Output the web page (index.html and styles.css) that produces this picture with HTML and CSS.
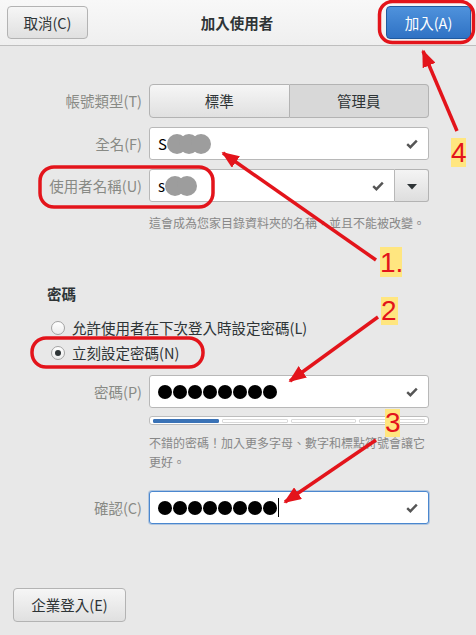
FILE: index.html
```html
<!DOCTYPE html>
<html lang="zh-Hant">

<head>
    <meta charset="UTF-8">
    <meta name="viewport" content="width=device-width, initial-scale=1.0">
    <title>加入使用者</title>
    <link rel="stylesheet" href="styles.css">
</head>

<body>
    <header class="titlebar">
        <button class="btn btn-cancel">取消(C)</button>
        <h1 class="title">加入使用者</h1>
        <button class="btn btn-add">加入(A)</button>
    </header>

    <div class="content">
        <div class="form">
            <label class="label">帳號類型(T)</label>
            <div class="toggle">
                <button class="toggle-item">標準</button>
                <button class="toggle-item checked">管理員</button>
            </div>

            <label class="label" for="fullname">全名(F)</label>
            <div class="entry" id="fullname">
                <span class="entry-text">S<span class="blob"></span><span class="blob"></span><span class="blob"></span></span>
                <svg class="check" width="12" height="10" viewBox="0 0 12 10"><path d="M1.2 5.2 L4.4 8.2 L10.8 1.6" fill="none" stroke="#555" stroke-width="2.4" /></svg>
            </div>

            <label class="label" for="username">使用者名稱(U)</label>
            <div class="combo">
                <div class="entry entry-combo" id="username">
                    <span class="entry-text">s<span class="blob"></span><span class="blob"></span></span>
                    <svg class="check" width="12" height="10" viewBox="0 0 12 10"><path d="M1.2 5.2 L4.4 8.2 L10.8 1.6" fill="none" stroke="#555" stroke-width="2.4" /></svg>
                </div>
                <button class="combo-button">
                    <svg width="10" height="6" viewBox="0 0 10 6"><path d="M0 0 H10 L5 5.5 Z" fill="#2e3436" /></svg>
                </button>
            </div>

            <p class="hint hint-first">這會成為您家目錄資料夾的名稱，並且不能被改變。</p>
        </div>

        <div class="password">
            <h2 class="section-title">密碼</h2>
            <div class="radio-row">
                <span class="radio"></span>
                <span>允許使用者在下次登入時設定密碼(L)</span>
            </div>
            <div class="radio-row">
                <span class="radio checked"></span>
                <span>立刻設定密碼(N)</span>
            </div>
        </div>

        <div class="form form-password">
            <label class="label" for="pw">密碼(P)</label>
            <div class="entry" id="pw">
                <span class="dots"><i></i><i></i><i></i><i></i><i></i><i></i><i></i><i></i></span>
                <svg class="check" width="12" height="10" viewBox="0 0 12 10"><path d="M1.2 5.2 L4.4 8.2 L10.8 1.6" fill="none" stroke="#555" stroke-width="2.4" /></svg>
            </div>

            <div class="strength">
                <span class="level filled"></span>
                <span class="level"></span>
                <span class="level"></span>
                <span class="level"></span>
            </div>

            <p class="hint hint-pw">不錯的密碼！加入更多字母、數字和標點符號會讓它更好。</p>

            <label class="label label-confirm" for="confirm">確認(C)</label>
            <div class="entry entry-focus" id="confirm">
                <span class="dots"><i></i><i></i><i></i><i></i><i></i><i></i><i></i><i></i></span>
                <span class="cursor"></span>
                <svg class="check" width="12" height="10" viewBox="0 0 12 10"><path d="M1.2 5.2 L4.4 8.2 L10.8 1.6" fill="none" stroke="#555" stroke-width="2.4" /></svg>
            </div>
        </div>

        <div class="footer">
            <button class="btn btn-enterprise">企業登入(E)</button>
        </div>
    </div>

    <!-- markup drawn over the dialog -->
    <svg class="marks" width="476" height="635" viewBox="0 0 476 635">
        <defs>
            <marker id="head" markerWidth="5" markerHeight="4" refX="4.5" refY="2" orient="auto">
                <path d="M0 0 L5 2 L0 4 Z" fill="#e3141b" />
            </marker>
        </defs>
        <g fill="none" stroke="#e3141b" stroke-width="3.5">
            <rect x="379.5" y="1.5" width="94" height="41" rx="13" />
            <rect x="40" y="167" width="173" height="40" rx="14" />
            <rect x="32" y="338" width="171" height="29" rx="14" />
            <line x1="457" y1="131" x2="423" y2="51" marker-end="url(#head)" />
            <line x1="376" y1="260" x2="223" y2="153" marker-end="url(#head)" />
            <line x1="378" y1="317" x2="290" y2="381" marker-end="url(#head)" />
            <line x1="376" y1="440" x2="285" y2="502" marker-end="url(#head)" />
        </g>
        <g fill="#ffe680">
            <rect x="451" y="138" width="15" height="29" />
            <rect x="380" y="247" width="22" height="30" />
            <rect x="381" y="297" width="17" height="28" />
            <rect x="385" y="409" width="15" height="28" />
        </g>
        <g class="mark-num">
            <text x="451" y="162">4</text>
            <text x="380" y="272">1.</text>
            <text x="381" y="320">2</text>
            <text x="385" y="432">3</text>
        </g>
    </svg>
</body>

</html>
```

FILE: styles.css
```css
body {
    margin: 0;
    width: 476px;
    height: 635px;
    position: relative;
    overflow: hidden;
    display: flex;
    flex-direction: column;
    background: #e8e8e8;
    font-family: "Noto Sans CJK TC", sans-serif;
    font-size: 14.5px;
    line-height: 18px;
    color: #2e3436;
}

.titlebar {
    height: 45px;
    flex-shrink: 0;
    display: flex;
    align-items: center;
    padding: 0 5px 0 7px;
    background: linear-gradient(#f8f8f8, #efefef);
    border-bottom: 1px solid #bebebe;
}

.title {
    flex: 1;
    margin: 0;
    text-align: center;
    font-size: 14.5px;
    font-weight: bold;
    color: #2e3436;
}

.btn {
    height: 33px;
    box-sizing: border-box;
    padding: 0;
    border: 1px solid #b3b3b3;
    border-radius: 4px;
    background: linear-gradient(#f6f6f6, #e0e0e0);
    color: #2e3436;
    font: inherit;
}

.btn-cancel {
    width: 81px;
}

.btn-add {
    width: 85px;
    border-color: #1f5aa0;
    background: linear-gradient(#4f92dc, #2f72c4);
    color: #fff;
}

.content {
    flex: 1;
    display: flex;
    flex-direction: column;
}

.form {
    display: grid;
    grid-template-columns: 142px 280px;
    column-gap: 7px;
    row-gap: 9px;
    align-items: center;
    padding-top: 38px;
}

.label {
    text-align: right;
    color: #888a85;
}

.toggle {
    display: flex;
    height: 34px;
}

.toggle-item {
    flex: 1;
    box-sizing: border-box;
    border: 1px solid #b3b3b3;
    background: linear-gradient(#f6f6f6, #e0e0e0);
    font: inherit;
    color: #2e3436;
    border-radius: 4px 0 0 4px;
}

.toggle-item.checked {
    border-left: 0;
    background: #d8d8d8;
    border-radius: 0 4px 4px 0;
}

.entry {
    height: 33px;
    box-sizing: border-box;
    display: flex;
    align-items: center;
    padding: 0 10px 0 8px;
    background: #fff;
    border: 1px solid #b8b8b8;
    border-radius: 3px;
    color: #000;
}

.entry-text {
    display: flex;
    align-items: center;
    font-size: 15px;
}

.blob {
    width: 20px;
    height: 20px;
    border-radius: 50%;
    background: #9d9d9d;
    margin-right: -8px;
}

.blob:first-child {
    margin-left: 0;
}

.check {
    margin-left: auto;
}

.combo {
    display: flex;
}

.entry-combo {
    flex: 1;
    border-radius: 3px 0 0 3px;
}

.combo-button {
    width: 34px;
    height: 33px;
    box-sizing: border-box;
    border: 1px solid #b3b3b3;
    border-left: 0;
    border-radius: 0 3px 3px 0;
    background: linear-gradient(#f4f4f4, #dedede);
    padding: 0;
}

.hint {
    grid-column: 2;
    margin: 0;
    font-size: 12px;
    line-height: 19px;
    color: #878787;
}

.hint-first {
    margin-top: 2px;
}

.password {
    padding-left: 51px;
    margin-top: 53px;
}

.section-title {
    margin: 0 0 12px -4px;
    font-size: 14.5px;
    font-weight: bold;
}

.radio-row {
    display: flex;
    align-items: center;
    gap: 7px;
    height: 25px;
    color: #2e3436;
}

.radio {
    width: 14px;
    height: 14px;
    box-sizing: border-box;
    border: 1px solid #a3a3a3;
    border-radius: 50%;
    background: linear-gradient(#ffffff, #ececec);
    display: flex;
    align-items: center;
    justify-content: center;
}

.radio.checked::after {
    content: "";
    width: 6px;
    height: 6px;
    border-radius: 50%;
    background: #2e3436;
}

.form-password {
    padding-top: 10px;
    row-gap: 0;
}

.dots {
    display: flex;
    gap: 1px;
}

.dots i {
    width: 14px;
    height: 14px;
    border-radius: 50%;
    background: #000;
}

.cursor {
    width: 1px;
    height: 19px;
    margin-left: 1px;
    background: #000;
}

.entry-focus {
    border-color: #4a87cf;
    box-shadow: 0 0 0 1px rgba(74, 135, 207, 0.35);
}

.strength {
    grid-column: 2;
    margin-top: 8px;
    height: 9px;
    box-sizing: border-box;
    display: flex;
    gap: 3px;
    align-items: center;
    padding: 0 3px;
    background: #fff;
    border: 1px solid #bdbdbd;
    border-radius: 3px;
}

.level {
    flex: 1;
    height: 4px;
    box-sizing: border-box;
    border: 1px solid #d9d9d9;
    border-radius: 1px;
}

.level.filled {
    background: #3a72b6;
    border-color: #3a72b6;
}

.hint-pw {
    margin-top: 8px;
}

.label-confirm {
    margin-top: 20px;
}

#confirm {
    margin-top: 20px;
}

.footer {
    margin-top: auto;
    padding: 0 0 13px 13px;
}

.btn-enterprise {
    width: 113px;
    height: 34px;
}

.marks {
    position: absolute;
    top: 0;
    left: 0;
    pointer-events: none;
}

.mark-num text {
    font-family: "Liberation Sans", sans-serif;
    font-size: 28px;
    fill: #e3141b;
}
```
